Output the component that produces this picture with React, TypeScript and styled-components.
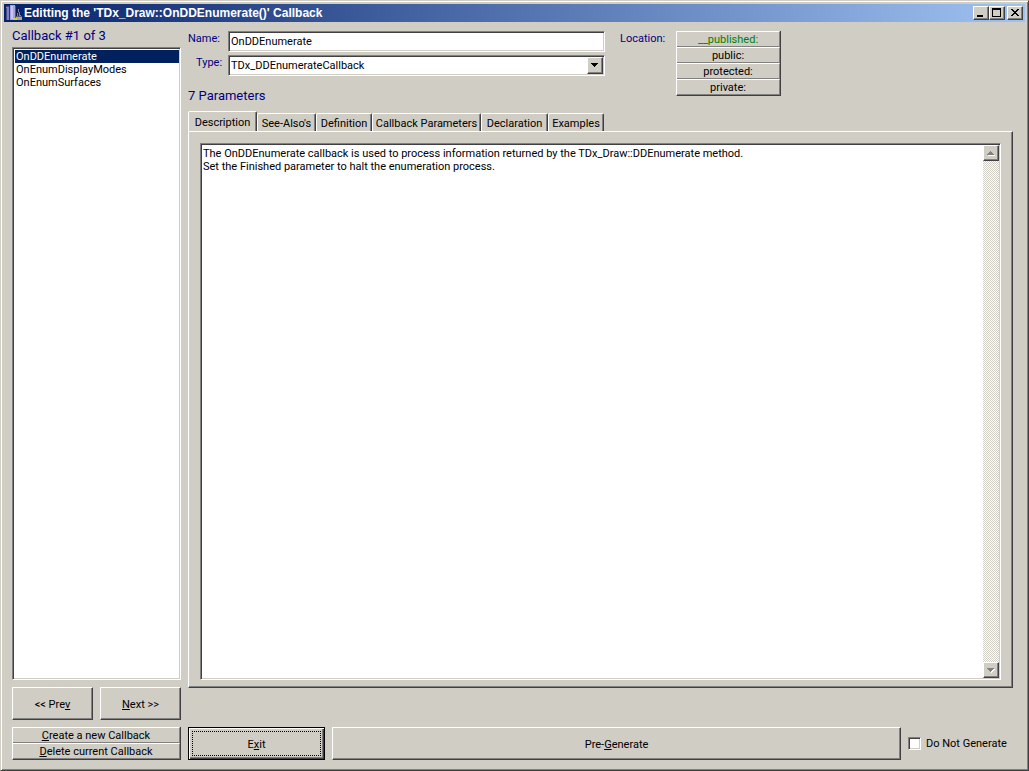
import React, { useState } from "react";
import styled, { createGlobalStyle, css } from "styled-components";

const face = "#d0cdc5";
const shade = "#808080";
const dark = "#404044";
const navy = "#000080";

const raised = css`
  border: 1px solid;
  border-color: #fff ${dark} ${dark} #fff;
  box-shadow: inset -1px -1px ${shade};
`;

const sunken = css`
  border: 1px solid;
  border-color: ${shade} #fff #fff ${shade};
  box-shadow: inset 1px 1px ${dark}, inset -1px -1px ${face};
`;

const GlobalStyle = createGlobalStyle`
  * { box-sizing: border-box; }
  body { margin: 0; background: ${face}; }
  body, button, input, select, textarea {
    font-family: Roboto, "Liberation Sans", Arial, sans-serif;
    font-size: 11px;
    line-height: 13px;
    color: #000;
  }
  button { padding: 0; background: ${face}; border-radius: 0; }
  button:focus, input:focus, select:focus, textarea:focus { outline: none; }
`;

const Window = styled.div`
  display: flex;
  flex-direction: column;
  min-height: 100vh;
  padding: 2px;
  background: ${face};
  border: 1px solid;
  border-color: ${face} ${dark} ${dark} ${face};
  box-shadow: inset 1px 1px #fff, inset -1px -1px ${shade};
`;

const TitleBar = styled.header`
  display: flex;
  align-items: center;
  height: 18px;
  margin: 1px 1px 0;
  padding: 0 2px;
  background: linear-gradient(to right, #06226a, #9fc2f2);
`;

const Title = styled.h1`
  flex: 1;
  margin: 0 0 0 2px;
  font-family: "Liberation Sans", Arial, sans-serif;
  font-size: 12px;
  line-height: 18px;
  font-weight: bold;
  color: #fff;
  white-space: nowrap;
`;

const CaptionButtons = styled.div`
  display: flex;
`;

const CaptionButton = styled.button<{ $apart?: boolean }>`
  ${raised}
  width: 16px;
  height: 14px;
  margin-left: ${(p) => (p.$apart ? 2 : 0)}px;
  svg { display: block; }
`;

const Body = styled.main`
  flex: 1;
  display: grid;
  grid-template-columns: 169px minmax(0, 1fr);
  column-gap: 7px;
  padding: 0 13px 8px 9px;
`;

const Sidebar = styled.section`
  display: flex;
  flex-direction: column;
  gap: 7px;
`;

const ListGroup = styled.div`
  flex: 1;
  display: flex;
  flex-direction: column;
`;

const Heading = styled.label`
  padding: 6px 0 3px;
  font-size: 13px;
  line-height: 16px;
  color: ${navy};
`;

const ListBox = styled.select`
  ${sunken}
  flex: 1;
  width: 100%;
  padding: 2px 1px 2px 2px;
  border-radius: 0;
  background: #fff;
  overflow: hidden;

  option {
    min-height: 13px;
    padding: 0 1px;
    line-height: 13px;
  }
  option:checked {
    background-image: linear-gradient(#00205e, #00205e);
    -webkit-text-fill-color: #fff;
  }
`;

const NavRow = styled.div`
  display: grid;
  grid-template-columns: 1fr 1fr;
  gap: 7px;
`;

const PushButton = styled.button`
  ${raised}
  height: 33px;
  padding-top: 2px;
`;

const DefaultButton = styled.button`
  height: 33px;
  padding: 2px;
  border: 1px solid #000;
  box-shadow: inset 1px 1px #fff, inset -1px -1px ${dark}, inset -2px -2px ${shade};
`;

const FocusRect = styled.span`
  display: flex;
  align-items: center;
  justify-content: center;
  height: 25px;
  margin: 0 1px;
  padding-top: 2px;
  border: 1px dotted #000;
`;

const ButtonStack = styled.div`
  display: flex;
  flex-direction: column;
  border: 1px solid;
  border-width: 0 1px 1px;
  border-color: ${dark} ${dark} ${dark} #fff;
`;

const StackButton = styled.button<{ $active?: boolean }>`
  height: 16px;
  padding-top: 2px;
  border: 1px solid;
  border-width: 1px 1px 1px 0;
  border-color: #fff ${shade} ${shade};
  line-height: 12px;
  color: ${(p) => (p.$active ? "#008000" : "#000")};
`;

const Editor = styled.section`
  display: flex;
  flex-direction: column;
`;

const Header = styled.div`
  display: flex;
  align-items: flex-start;
  padding: 9px 0 7px;
`;

const Fields = styled.div`
  flex: 0 1 417px;
  display: grid;
  grid-template-columns: 40px minmax(0, 1fr);
  row-gap: 3px;
`;

const FieldLabel = styled.label<{ $indent?: boolean }>`
  padding-left: ${(p) => (p.$indent ? 8 : 0)}px;
  line-height: 15px;
  color: ${navy};
`;

const TextBox = styled.input`
  ${sunken}
  width: 100%;
  height: 21px;
  padding: 0 2px;
  border-radius: 0;
  background: #fff;
`;

const Combo = styled.div`
  display: grid;
  grid-template-columns: minmax(0, 1fr) 18px;
  align-items: center;
`;

const ComboSelect = styled.select`
  ${sunken}
  grid-area: 1 / 1 / 2 / 3;
  appearance: none;
  height: 21px;
  padding: 0 20px 0 2px;
  border-radius: 0;
  background: #fff;
`;

const ComboArrow = styled.span`
  ${raised}
  grid-area: 1 / 2;
  width: 16px;
  height: 17px;
  pointer-events: none;
  background: ${face};
  svg { display: block; }
`;

const Parameters = styled.div`
  grid-column: 1 / 3;
  margin-top: 9px;
  font-size: 13px;
  line-height: 16px;
  color: ${navy};
`;

const Location = styled.div`
  display: grid;
  grid-template-columns: 56px 105px;
  margin-left: 15px;
`;

const LocationLabel = styled.span`
  line-height: 15px;
  color: ${navy};
`;

const TabStrip = styled.div`
  display: flex;
  align-items: flex-end;
  height: 20px;
`;

const Tab = styled.button<{ $w: number; $active?: boolean }>`
  flex: 0 1 ${(p) => p.$w}px;
  height: ${(p) => (p.$active ? 21 : 18)}px;
  margin-bottom: ${(p) => (p.$active ? -1 : 0)}px;
  padding-top: ${(p) => (p.$active ? 0 : 2)}px;
  border: 1px solid;
  border-color: #fff ${dark} transparent #fff;
  border-bottom-width: 0;
  border-radius: 2px 2px 0 0;
  box-shadow: inset -1px 0 ${shade};
  white-space: nowrap;
`;

const Panel = styled.div`
  ${raised}
  flex: 1;
  display: flex;
  padding: 11px 11px 7px;
`;

const Memo = styled.div`
  ${sunken}
  flex: 1;
  display: flex;
  padding: 1px;
  background: #fff;
`;

const MemoText = styled.textarea`
  flex: 1;
  min-width: 0;
  margin: 1px 0 0 1px;
  padding: 1px 0;
  border: 0;
  resize: none;
  overflow: hidden;
  background: transparent;
`;

const ScrollBar = styled.div`
  display: flex;
  flex-direction: column;
  justify-content: space-between;
  width: 16px;
  background: repeating-conic-gradient(#fff 0 25%, ${face} 0 50%) 0 0 / 2px 2px;
`;

const ScrollButton = styled.button`
  ${raised}
  width: 16px;
  height: 16px;
  svg { display: block; }
`;

const Footer = styled.footer`
  display: grid;
  grid-template-columns: 137px minmax(0, 1fr) 105px;
  gap: 7px;
  margin-top: 39px;
`;

const CheckLabel = styled.label`
  display: flex;
  align-items: center;
  gap: 5px;
  white-space: nowrap;
`;

const CheckBox = styled.input`
  ${sunken}
  appearance: none;
  width: 13px;
  height: 13px;
  margin: 0;
  background: #fff;
  &:checked { background: radial-gradient(#000 0 3px, #fff 3px); }
`;

const BooksIcon = () => (
  <svg width="16" height="16" viewBox="0 0 16 16" shapeRendering="crispEdges" aria-hidden="true">
    <path d="M0 2h3v13H0z" fill="#8080bc" />
    <path d="M0 1h3v1H0zM0 3h1v12H0z" fill="#4a4a86" />
    <path d="M3 1h1v14H3z" fill="#34346c" />
    <path d="M4 0h5v15H4z" fill="#a4a4e0" />
    <path d="M5 1h2v13H5z" fill="#c6c6f4" />
    <path d="M9 1h1v14H9z" fill="#5c4c80" />
    <path d="M10 2h1v9h-1z" fill="#18183c" />
    <path d="M12 4h1v3h1v3h1v2h-4V8h1z" fill="#7a7ab4" />
    <path d="M12 7h1v4h-1z" fill="#2a2a5c" />
    <path d="M10 11h6v4h-6z" fill="#a4a4ac" />
    <path d="M10 11h6v1h-6z" fill="#5a5a70" />
    <path d="M7 13h4v2H7z" fill="#d4cc48" />
  </svg>
);

const Triangle = ({ up, w, h, disabled }: { up?: boolean; w: number; h: number; disabled?: boolean }) => {
  const d = up ? "M6 5h1v1h1v1h1v1h1v1H3V8h1V7h1V6h1z" : "M3 5h7v1H9v1H8v1H7v1H6V8H5V7H4V6H3z";
  return (
    <svg width={w} height={h} viewBox={`0 0 ${w} ${h}`} shapeRendering="crispEdges" aria-hidden="true">
      {disabled && <path d={d} fill="#fff" transform="translate(1 1)" />}
      <path d={d} fill={disabled ? shade : "#000"} />
    </svg>
  );
};

const callbacks = ["OnDDEnumerate", "OnEnumDisplayModes", "OnEnumSurfaces"];
const scopes = ["__published:", "public:", "protected:", "private:"];
const tabs = [
  { name: "Description", width: 69 },
  { name: "See-Also's", width: 59 },
  { name: "Definition", width: 56 },
  { name: "Callback Parameters", width: 109 },
  { name: "Declaration", width: 67 },
  { name: "Examples", width: 56 },
];
const description =
  "The OnDDEnumerate callback is used to process information returned by the TDx_Draw::DDEnumerate method.\nSet the Finished parameter to halt the enumeration process.";

export default function App() {
  const [scope, setScope] = useState(scopes[0]);
  const [tab, setTab] = useState(tabs[0].name);

  return (
    <>
      <GlobalStyle />
      <Window>
        <TitleBar>
          <BooksIcon />
          <Title>Editting the 'TDx_Draw::OnDDEnumerate()' Callback</Title>
          <CaptionButtons>
            <CaptionButton aria-label="Minimize">
              <svg width="14" height="12" shapeRendering="crispEdges"><path d="M3 8h6v2H3z" /></svg>
            </CaptionButton>
            <CaptionButton aria-label="Maximize">
              <svg width="14" height="12" shapeRendering="crispEdges"><path fillRule="evenodd" d="M2 1h9v9H2zM3 3v6h7V3z" /></svg>
            </CaptionButton>
            <CaptionButton aria-label="Close" $apart>
              <svg width="14" height="12" shapeRendering="crispEdges">
                <path d="M3 2h2v1h1v1h2V3h1V2h2v1h-1v1H9v1H8v1h1v1h1v1h1v1H9V8H8V7H6v1H5v1H3V8h1V7h1V6h1V5H5V4H4V3H3z" />
              </svg>
            </CaptionButton>
          </CaptionButtons>
        </TitleBar>

        <Body>
          <Sidebar>
            <ListGroup>
              <Heading htmlFor="callbacks">Callback #1 of 3</Heading>
              <ListBox id="callbacks" size={3} defaultValue={callbacks[0]}>
                {callbacks.map((c) => <option key={c}>{c}</option>)}
              </ListBox>
            </ListGroup>
            <NavRow>
              <PushButton>&lt;&lt; Pre<u>v</u></PushButton>
              <PushButton><u>N</u>ext &gt;&gt;</PushButton>
            </NavRow>
            <ButtonStack>
              <StackButton><u>C</u>reate a new Callback</StackButton>
              <StackButton><u>D</u>elete current Callback</StackButton>
            </ButtonStack>
          </Sidebar>

          <Editor>
            <Header>
              <Fields>
                <FieldLabel htmlFor="name">Name:</FieldLabel>
                <TextBox id="name" defaultValue="OnDDEnumerate" />
                <FieldLabel htmlFor="type" $indent>Type:</FieldLabel>
                <Combo>
                  <ComboSelect id="type">
                    <option>TDx_DDEnumerateCallback</option>
                  </ComboSelect>
                  <ComboArrow><Triangle w={14} h={15} /></ComboArrow>
                </Combo>
                <Parameters>7 Parameters</Parameters>
              </Fields>
              <Location role="group" aria-labelledby="location">
                <LocationLabel id="location">Location:</LocationLabel>
                <ButtonStack>
                  {scopes.map((s) => (
                    <StackButton key={s} $active={s === scope} onClick={() => setScope(s)}>{s}</StackButton>
                  ))}
                </ButtonStack>
              </Location>
            </Header>

            <TabStrip role="tablist">
              {tabs.map((t) => (
                <Tab
                  key={t.name}
                  role="tab"
                  aria-selected={t.name === tab}
                  $w={t.width}
                  $active={t.name === tab}
                  onClick={() => setTab(t.name)}
                >
                  {t.name}
                </Tab>
              ))}
            </TabStrip>
            <Panel role="tabpanel">
              <Memo>
                <MemoText aria-label="Description" defaultValue={description} spellCheck={false} />
                <ScrollBar>
                  <ScrollButton disabled aria-label="Scroll up"><Triangle up disabled w={14} h={14} /></ScrollButton>
                  <ScrollButton disabled aria-label="Scroll down"><Triangle disabled w={14} h={14} /></ScrollButton>
                </ScrollBar>
              </Memo>
            </Panel>

            <Footer>
              <DefaultButton><FocusRect><span>E<u>x</u>it</span></FocusRect></DefaultButton>
              <PushButton>Pre-<u>G</u>enerate</PushButton>
              <CheckLabel>
                <CheckBox type="checkbox" />
                Do Not Generate
              </CheckLabel>
            </Footer>
          </Editor>
        </Body>
      </Window>
    </>
  );
}
